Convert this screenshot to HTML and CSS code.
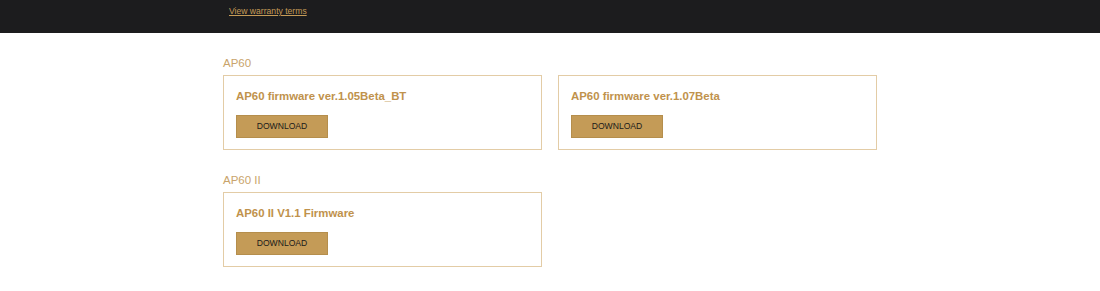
FILE: index.html
```html
<!DOCTYPE html>
<html lang="en">
<head>
    <meta charset="UTF-8">
    <title>Firmware</title>
    <link rel="stylesheet" href="styles.css">
</head>
<body>
    <header class="top-bar">
        <a href="#" class="warranty-link">View warranty terms</a>
    </header>

    <main class="downloads">
        <section class="product">
            <h3 class="product-name">AP60</h3>
            <div class="file-grid">
                <div class="file-card">
                    <h4>AP60 firmware ver.1.05Beta_BT</h4>
                    <a href="#" class="download-button">DOWNLOAD</a>
                </div>
                <div class="file-card">
                    <h4>AP60 firmware ver.1.07Beta</h4>
                    <a href="#" class="download-button">DOWNLOAD</a>
                </div>
            </div>
        </section>

        <section class="product">
            <h3 class="product-name">AP60 II</h3>
            <div class="file-grid">
                <div class="file-card">
                    <h4>AP60 II V1.1 Firmware</h4>
                    <a href="#" class="download-button">DOWNLOAD</a>
                </div>
            </div>
        </section>
    </main>
</body>
</html>
```

FILE: styles.css
```css
body {
    margin: 0;
    padding: 0;
    background-color: #ffffff;
    font-family: "Liberation Sans", Arial, sans-serif;
}

.top-bar {
    height: 33px;
    background-color: #1c1c1e;
    padding-left: 229px;
    box-sizing: border-box;
}

.warranty-link {
    display: inline-block;
    margin-top: 4px;
    font-size: 8.6px;
    line-height: 12px;
    color: #c59b57;
}

.downloads {
    width: 654px;
    margin: 0 auto;
}

.product {
    padding-top: 23px;
}

.product-name {
    margin: 0 0 4px 0;
    font-size: 11.5px;
    line-height: 15px;
    font-weight: normal;
    color: #c9a46b;
}

.file-grid {
    display: grid;
    grid-template-columns: 319px 319px;
    gap: 16px;
}

.file-card {
    border: 1px solid #e3cca6;
    padding: 13px 12px 11px 12px;
}

.file-card h4 {
    margin: 0 0 11px 0;
    font-size: 11.4px;
    line-height: 15px;
    font-weight: bold;
    color: #c0924c;
}

.download-button {
    display: block;
    width: 92px;
    height: 23px;
    box-sizing: border-box;
    border: 1px solid #b58e4c;
    background-color: #c49b57;
    color: #1a1a1a;
    font-size: 8.6px;
    line-height: 21px;
    text-align: center;
    text-decoration: none;
}
```
